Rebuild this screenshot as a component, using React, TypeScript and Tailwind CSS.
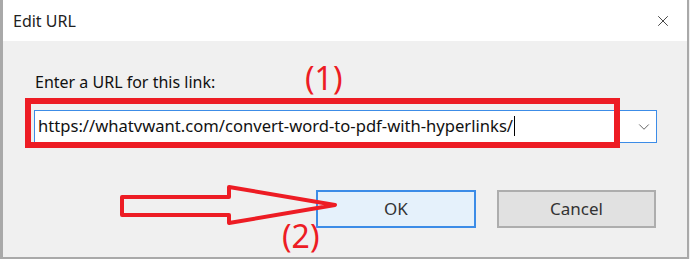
import { X, ChevronDown } from 'lucide-react';

const font = { fontFamily: '"Noto Sans", "Open Sans", sans-serif' };

const Annotations = () => (
  <>
    {/* red box around the url field */}
    <div className="absolute left-[25px] top-[98px] w-[595px] h-[50px] border-[6px] border-[#ed1c24]" />
    <div className="absolute left-[305px] top-[56px] text-[32px] leading-[44px] text-[#ed1c24]">(1)</div>
    <svg
      className="absolute left-0 top-0"
      width="690"
      height="259"
      viewBox="0 0 690 259"
      fill="none"
    >
      <polygon
        points="122,197 229,197 229,187 335,205 229,223 229,215 122,215"
        stroke="#ed1c24"
        strokeWidth="4"
        strokeLinejoin="round"
      />
    </svg>
    <div className="absolute left-[282px] top-[214px] text-[32px] leading-[44px] text-[#ed1c24]">(2)</div>
  </>
);

export default function App() {
  return (
    <div className="relative w-[690px] h-[259px] bg-[#f0f0f0] overflow-hidden" style={font}>
      <div className="w-[689px] h-[259px] flex flex-col border-l-[3px] border-r-2 border-b-2 border-[#a9a9a9]">
        <div className="h-[41px] bg-white flex items-center justify-between pl-[10px] pr-[15px]">
          <span className="text-[16px] text-[#222] pt-[1px]">Edit URL</span>
          <X size={18} strokeWidth={1.2} className="text-[#333]" />
        </div>
        <div className="flex-1 flex flex-col">
          <div className="mt-[31px] pl-[32px] text-[16px] leading-[20px] text-[#111]">
            Enter a URL for this link:
          </div>
          <div className="mt-[18px] ml-[31px] w-[623px] h-[33px] bg-white border border-[#3c8ce7] flex items-center justify-between pl-[3px] pr-[3px]">
            <span className="text-[16.6px] text-[#111] flex items-center">
              https://whatvwant.com/convert-word-to-pdf-with-hyperlinks/
              <span className="ml-[1px] inline-block w-[1px] h-[20px] bg-black" />
            </span>
            <ChevronDown size={18} strokeWidth={1.2} className="text-[#555]" />
          </div>
          <div className="mt-[47px] flex justify-end gap-[21px] pr-[31px]">
            <button className="w-[160px] h-[38px] bg-[#e5f1fb] border-2 border-[#3c8ce7] text-[17px] text-[#333]">
              OK
            </button>
            <button className="w-[159px] h-[38px] bg-[#e1e1e1] border-2 border-[#adadad] text-[17px] text-[#333]">
              Cancel
            </button>
          </div>
        </div>
      </div>
      <Annotations />
    </div>
  );
}
